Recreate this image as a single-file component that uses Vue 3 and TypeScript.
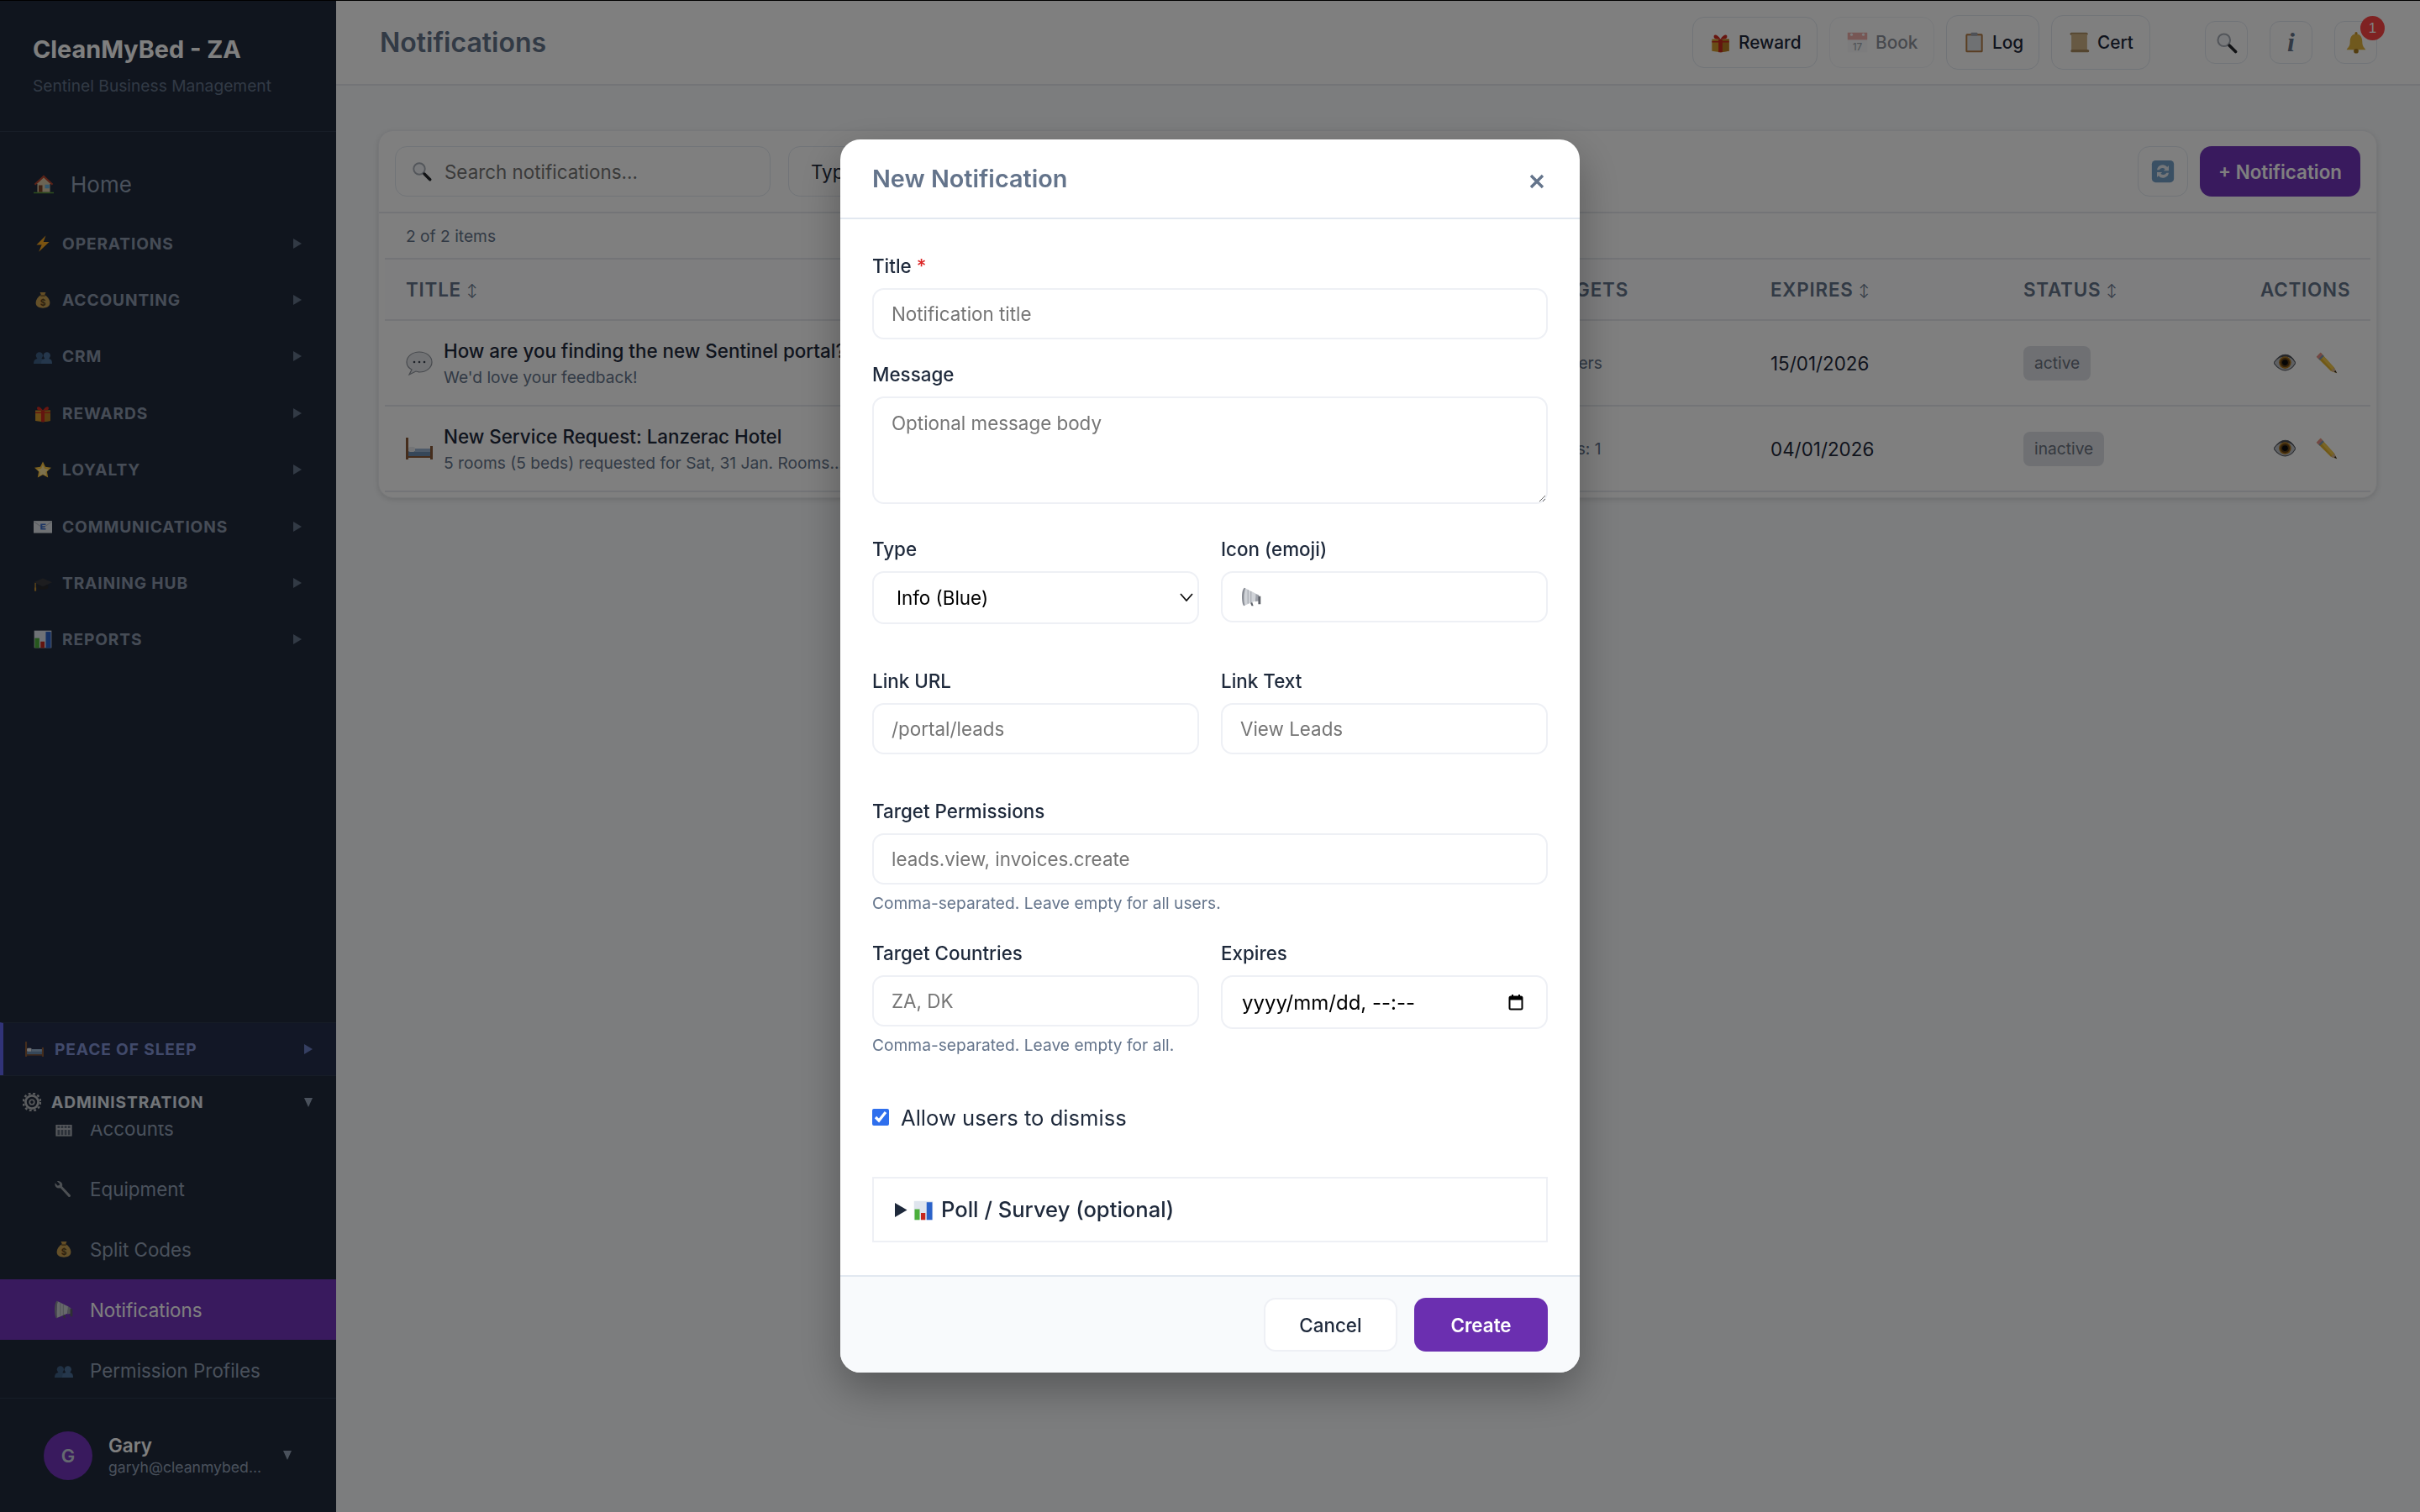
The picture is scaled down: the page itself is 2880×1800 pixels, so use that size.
<script setup lang="ts">
interface NavItem { label: string; icon: string; active?: boolean }
const sections: NavItem[] = [
  { label: 'OPERATIONS', icon: 'bolt' },
  { label: 'ACCOUNTING', icon: 'bag' },
  { label: 'CRM', icon: 'people' },
  { label: 'REWARDS', icon: 'gift' },
  { label: 'LOYALTY', icon: 'star' },
  { label: 'COMMUNICATIONS', icon: 'mail' },
  { label: 'TRAINING HUB', icon: 'cap' },
  { label: 'REPORTS', icon: 'chart' },
]
const adminItems: NavItem[] = [
  { label: 'Accounts', icon: 'office' },
  { label: 'Equipment', icon: 'wrench' },
  { label: 'Split Codes', icon: 'bag' },
  { label: 'Notifications', icon: 'horn', active: true },
  { label: 'Permission Profiles', icon: 'people' },
]
const rows = [
  { icon: 'balloon', title: 'How are you finding the new Sentinel portal?', sub: "We'd love your feedback!", type: 'Poll', targets: 'All users', expires: '15/01/2026', status: 'active' },
  { icon: 'bed', title: 'New Service Request: Lanzerac Hotel', sub: '5 rooms (5 beds) requested for Sat, 31 Jan. Rooms...', type: 'Info', targets: 'Perms: 1', expires: '04/01/2026', status: 'inactive' },
]
const href = (n: string): string => '#i-' + n
</script>

<template>
  <div class="app">
    <svg class="defs" aria-hidden="true">
      <defs>
        <g id="i-home"><path d="M16 3 2 16h4v13h20V16h4z" fill="#d9c9a8"/><path d="M16 2 1 16l2 2L16 6l13 12 2-2z" fill="#b5452f"/><rect x="8" y="18" width="6" height="11" fill="#7a4326"/><rect x="18" y="17" width="7" height="6" fill="#6ab0dc"/><path d="M0 29h32v2H0z" fill="#5c9a3c"/></g>
        <g id="i-bolt"><path d="M21 2 5 18h9L9 30l18-17h-10z" fill="#f5a623"/></g>
        <g id="i-bag"><path d="M11 3h10l-2 5h-6z" fill="#c79a4a"/><path d="M12 8h8c6 4 9 10 8 15-1 5-6 7-12 7S5 28 4 23C3 18 6 12 12 8z" fill="#c9a052"/><path d="M12 8h8v2h-8z" fill="#7a5a26"/><text x="16" y="26" font-size="15" font-weight="700" text-anchor="middle" fill="#5c431c" font-family="Inter">$</text></g>
        <g id="i-people"><circle cx="10" cy="15" r="6" fill="#3f6087"/><path d="M0 29c0-7 4-9 10-9s10 2 10 9z" fill="#3f6087"/><circle cx="23" cy="15" r="6" fill="#4a6f99"/><path d="M13 29c0-7 4-9 10-9s9 2 9 9z" fill="#4a6f99"/></g>
        <g id="i-gift"><path d="M3 11h26v18l-13 2-13-2z" fill="#d39a2c"/><path d="M16 12v19l13-2V11z" fill="#b97f22"/><rect x="13" y="11" width="6" height="20" fill="#c8281e"/><path d="M3 14h26v2H3z" fill="#c8281e"/><path d="M16 11C11 3 5 3 6 8c0 3 5 3 10 3zm0 0c5-8 11-8 10-3 0 3-5 3-10 3z" fill="#d12c20"/></g>
        <g id="i-star"><path d="M16 2l4.4 9.3 10.1 1.4-7.3 7 1.8 10L16 25l-9 4.7 1.8-10-7.3-7 10.1-1.4z" fill="#f7c23e"/><path d="M16 8l3 6.4 7 1-5 4.8 1.2 6.8L16 24l-6 3 1.2-6.8-5-4.8 7-1z" fill="#fbe39a"/></g>
        <g id="i-mail"><rect x="0" y="6" width="32" height="21" fill="#dfe3e8"/><path d="M0 6l16 11L32 6v2L16 19 0 8z" fill="#b4bac4"/><path d="M12 11h9v2h-6v2h5v2h-5v2h6v2h-9z" fill="#3b6cc9"/></g>
        <g id="i-cap"><path d="M16 8 0 15l16 7 16-7z" fill="#3a3a3e"/><path d="M7 19v6c4 3 14 3 18 0v-6l-9 4z" fill="#28282b"/><path d="M3 16v9" stroke="#c59030" stroke-width="2"/><rect x="1.5" y="24" width="3" height="6" fill="#c59030"/></g>
        <g id="i-chart"><rect x="1" y="1" width="30" height="30" fill="#dfe5ee"/><rect x="2" y="14" width="8" height="17" fill="#4caf3c"/><rect x="12" y="20" width="7" height="11" fill="#c7281e"/><rect x="21" y="3" width="9" height="28" fill="#2a62c9"/></g>
        <g id="i-bed"><rect x="0" y="3" width="3" height="26" fill="#8a5a38"/><rect x="29" y="13" width="3" height="16" fill="#8a5a38"/><rect x="3" y="19" width="26" height="6" fill="#6d8fb3"/><rect x="3" y="14" width="8" height="6" rx="2" fill="#e6e9ed"/><rect x="11" y="16" width="18" height="4" fill="#9ab5d2"/><rect x="3" y="25" width="26" height="2" fill="#8a5a38"/></g>
        <g id="i-gear"><circle cx="16" cy="16" r="11" fill="none" stroke="#b5b8bd" stroke-width="4"/><circle cx="16" cy="16" r="15" fill="none" stroke="#b5b8bd" stroke-width="3.5" stroke-dasharray="4 4"/><circle cx="16" cy="16" r="4" fill="none" stroke="#b5b8bd" stroke-width="2.5"/></g>
        <g id="i-office"><rect x="2" y="2" width="28" height="28" fill="#aeb3ba"/><g fill="#566071"><rect x="5" y="5" width="4" height="4"/><rect x="11" y="5" width="4" height="4"/><rect x="17" y="5" width="4" height="4"/><rect x="23" y="5" width="4" height="4"/><rect x="5" y="12" width="4" height="4"/><rect x="11" y="12" width="4" height="4"/><rect x="17" y="12" width="4" height="4"/><rect x="23" y="12" width="4" height="4"/><rect x="5" y="19" width="4" height="9"/><rect x="11" y="19" width="4" height="9"/><rect x="17" y="19" width="4" height="9"/><rect x="23" y="19" width="4" height="9"/></g></g>
        <g id="i-wrench"><path d="M4 3 9 8l-1 2-3 1-4-5c-2 6 3 11 9 9l14 15c2 2 5-1 3-3L13 12C15 7 10 2 4 3z" fill="#9aa0a8"/></g>
        <g id="i-horn"><path d="M4 1 3 31l19-8 2-12z" fill="#cfd2d7"/><path d="M4 1C1 3 0 10 0 16s1 13 3 15l2-1C3 26 3 6 6 2z" fill="#8a8e96"/><path d="M10 4v23M15 7v18" stroke="#a3a7ae" stroke-width="1.5"/><path d="M23 11l5 2v10l-6 1z" fill="#9ea2aa"/><path d="M14 26l3-1 2 6h-3zM27 15h4v13h-4z" fill="#5d6168"/></g>
        <g id="i-glass"><circle cx="12" cy="12" r="9" fill="#f3f5f8" stroke="#a7adb6" stroke-width="2.5"/><path d="M20 20l9 9" stroke="#24262b" stroke-width="4.5" stroke-linecap="round"/></g>
        <g id="i-bell"><path d="M16 3c7 0 9 6 9 12s3 8 5 11H2c2-3 5-5 5-11S9 3 16 3z" fill="#e0b23c"/><rect x="14" y="0" width="4" height="4" rx="2" fill="#c7952a"/><circle cx="16" cy="28" r="3.5" fill="#a77a1e"/></g>
        <g id="i-cal"><rect x="1" y="1" width="30" height="30" fill="#f4f5f7"/><rect x="1" y="1" width="30" height="11" fill="#e0605a"/><circle cx="7" cy="4" r="2" fill="#f4f5f7"/><circle cx="25" cy="4" r="2" fill="#f4f5f7"/><text x="16" y="28" font-size="15" text-anchor="middle" fill="#4b5563" font-family="Inter">17</text></g>
        <g id="i-clip"><rect x="3" y="3" width="26" height="28" rx="2" fill="#b37a42"/><rect x="5.5" y="5.5" width="21" height="23" fill="#dfe2e7"/><rect x="11" y="1" width="10" height="5" rx="1" fill="#9ca3af"/></g>
        <g id="i-scroll"><rect x="2" y="1" width="27" height="4" rx="2" fill="#a98a5e"/><rect x="4" y="3" width="24" height="26" fill="#cfb387"/><rect x="3" y="27" width="28" height="4" rx="2" fill="#a98a5e"/></g>
        <g id="i-sync"><rect x="1" y="1" width="30" height="30" rx="5" fill="#74a0c8"/><path d="M8 14a8 8 0 0 1 14-4l2-2v7h-7l2-2a5 5 0 0 0-8 1zm16 4a8 8 0 0 1-14 4l-2 2v-7h7l-2 2a5 5 0 0 0 8-1z" fill="#e8edf2"/></g>
        <g id="i-balloon"><path d="M16 3C8 3 1 8 1 15c0 4 2 7 6 9l-3 6 8-4c1 0 3 1 4 1 8 0 15-5 15-12S24 3 16 3z" fill="#e4e7eb" stroke="#8f949c" stroke-width="1.2"/><circle cx="10" cy="15" r="1.3" fill="#3c4450"/><circle cx="16" cy="15" r="1.3" fill="#3c4450"/><circle cx="22" cy="15" r="1.3" fill="#3c4450"/></g>
        <g id="i-eye"><path d="M0 16C6 7 12 4 17 4c6 0 11 5 15 12-4 7-9 11-15 11-6 0-12-4-17-11z" fill="#bfc2c8" stroke="#5b5f66" stroke-width="1.4"/><path d="M4 12C9 5 14 4 17 4c6 0 11 4 14 10-5-5-8-7-14-7S8 8 4 12z" fill="#4a4d54"/><circle cx="16.5" cy="15.5" r="9" fill="#a87420"/><circle cx="16.5" cy="15.5" r="6.8" fill="#5c3c14"/><circle cx="16.5" cy="15.5" r="4.2" fill="#0c0c0c"/></g>
        <g id="i-pencil"><path d="M1 7l6-6 20 22 4 8-9-3z" fill="#e2b32f"/><path d="M4 4l20 22 3-3L7 1z" fill="#f2c94c"/><path d="M1 7l6-6 3 3-6 6z" fill="#e68f8f"/><path d="M4 10l6-6 2 2-6 6z" fill="#7f95b3"/><path d="M22 28l5-5 4 8z" fill="#d8b58a"/><path d="M28.5 27l2.5 4-4-2z" fill="#16181c"/></g>
      </defs>
    </svg>

    <aside class="sidebar">
      <div class="brand">
        <div class="brand-name">CleanMyBed - ZA</div>
        <div class="brand-sub">Sentinel Business Management</div>
      </div>
      <nav class="nav">
        <a class="home"><svg class="ic home-ic" viewBox="0 0 32 32"><use :href="href('home')" /></svg>Home</a>
        <div v-for="s in sections" :key="s.label" class="section">
          <svg class="ic sec-ic" viewBox="0 0 32 32"><use :href="href(s.icon)" /></svg>
          <span class="sec-label">{{ s.label }}</span>
          <span class="tri right"></span>
        </div>
      </nav>
      <div class="pinned peace">
        <svg class="ic sec-ic" viewBox="0 0 32 32"><use :href="href('bed')" /></svg>
        <span class="sec-label">PEACE OF SLEEP</span>
        <span class="tri right"></span>
      </div>
      <div class="pinned admin">
        <svg class="ic gear-ic" viewBox="0 0 32 32"><use :href="href('gear')" /></svg>
        <span class="sec-label">ADMINISTRATION</span>
        <span class="tri down"></span>
      </div>
      <div class="admin-scroll">
        <div class="admin-list">
          <a v-for="i in adminItems" :key="i.label" class="admin-item" :class="{ active: i.active }">
            <svg class="ic sec-ic" viewBox="0 0 32 32"><use :href="href(i.icon)" /></svg>
            {{ i.label }}
          </a>
        </div>
      </div>
      <div class="user">
        <div class="avatar">G</div>
        <div class="user-text">
          <div class="user-name">Gary</div>
          <div class="user-mail">garyh@cleanmybed...</div>
        </div>
        <span class="tri down small"></span>
      </div>
    </aside>

    <main class="main">
      <header class="topbar">
        <h1 class="page-title">Notifications</h1>
        <div class="top-actions">
          <button class="tbtn b-reward"><svg class="ic t-ic" viewBox="0 0 32 32"><use :href="href('gift')" /></svg>Reward</button>
          <button class="tbtn dim b-book"><svg class="ic t-ic" viewBox="0 0 32 32"><use :href="href('cal')" /></svg>Book</button>
          <button class="tbtn tall b-log"><svg class="ic t-ic" viewBox="0 0 32 32"><use :href="href('clip')" /></svg>Log</button>
          <button class="tbtn tall b-cert"><svg class="ic t-ic" viewBox="0 0 32 32"><use :href="href('scroll')" /></svg>Cert</button>
          <div class="icon-btns">
            <button class="ibtn"><svg class="ic i-ic" viewBox="0 0 32 32"><use :href="href('glass')" /></svg></button>
            <button class="ibtn info">i</button>
            <button class="ibtn bell"><svg class="ic i-ic" viewBox="0 0 32 32"><use :href="href('bell')" /></svg><span class="badge">1</span></button>
          </div>
        </div>
      </header>

      <section class="card">
        <div class="toolbar">
          <div class="search">
            <svg class="ic search-ic" viewBox="0 0 32 32"><use :href="href('glass')" /></svg>
            <input class="search-input" placeholder="Search notifications..." />
          </div>
          <div class="filter">Type: All</div>
          <div class="spacer"></div>
          <button class="refresh"><svg class="ic ref-ic" viewBox="0 0 32 32"><use :href="href('sync')" /></svg></button>
          <button class="add">+ Notification</button>
        </div>
        <div class="inner">
          <div class="count">2 of 2 items</div>
          <div class="trow thead">
            <div>TITLE <span class="sort">↕</span></div>
            <div>TYPE <span class="sort">↕</span></div>
            <div>TARGETS</div>
            <div>EXPIRES <span class="sort">↕</span></div>
            <div>STATUS <span class="sort">↕</span></div>
            <div class="act-h">ACTIONS</div>
          </div>
          <div v-for="r in rows" :key="r.title" class="trow tbody">
            <div class="title-cell">
              <svg class="ic row-ic" viewBox="0 0 32 32"><use :href="href(r.icon)" /></svg>
              <div class="title-text">
                <div class="r-title">{{ r.title }}</div>
                <div class="r-sub">{{ r.sub }}</div>
              </div>
            </div>
            <div class="muted">{{ r.type }}</div>
            <div class="muted">{{ r.targets }}</div>
            <div class="date">{{ r.expires }}</div>
            <div><span class="pill">{{ r.status }}</span></div>
            <div class="acts">
              <svg class="ic act-ic" viewBox="0 0 32 32"><use :href="href('eye')" /></svg>
              <svg class="ic act-ic" viewBox="0 0 32 32"><use :href="href('pencil')" /></svg>
            </div>
          </div>
        </div>
      </section>
    </main>

    <div class="overlay">
      <div class="modal">
        <div class="m-head">
          <h2 class="m-title">New Notification</h2>
          <svg class="m-close" viewBox="0 0 18 18"><path d="M2 2l14 14M16 2 2 16" stroke="#64748b" stroke-width="3.4" fill="none" /></svg>
        </div>
        <div class="m-body">
          <div class="field title-field">
            <label>Title <span class="req">*</span></label>
            <input placeholder="Notification title" />
          </div>
          <div class="field msg-field">
            <label>Message</label>
            <textarea placeholder="Optional message body"></textarea>
          </div>
          <div class="pair type-pair">
            <div class="field">
              <label>Type</label>
              <div class="sel-wrap">
                <select class="sel"><option>Info (Blue)</option></select>
                <svg class="chev" viewBox="0 0 16 10"><path d="M1 1l7 8 7-8" stroke="#111" stroke-width="1.8" fill="none" /></svg>
              </div>
            </div>
            <div class="field">
              <label>Icon (emoji)</label>
              <div class="icon-input">
                <input />
                <svg class="ic field-ic" viewBox="0 0 32 32"><use :href="href('horn')" /></svg>
              </div>
            </div>
          </div>
          <div class="pair link-pair">
            <div class="field">
              <label>Link URL</label>
              <input placeholder="/portal/leads" />
            </div>
            <div class="field">
              <label>Link Text</label>
              <input placeholder="View Leads" />
            </div>
          </div>
          <div class="field perm">
            <label>Target Permissions</label>
            <input placeholder="leads.view, invoices.create" />
            <div class="hint">Comma-separated. Leave empty for all users.</div>
          </div>
          <div class="pair country-pair">
            <div class="field">
              <label>Target Countries</label>
              <input placeholder="ZA, DK" />
              <div class="hint">Comma-separated. Leave empty for all.</div>
            </div>
            <div class="field">
              <label>Expires</label>
              <div class="date-input">
                <span>yyyy/mm/dd, --:--</span>
                <svg class="cal" viewBox="0 0 20 20"><path d="M6 1v3M14 1v3" stroke="#000" stroke-width="2"/><rect x="2.5" y="3.5" width="15" height="15" rx="1.5" fill="none" stroke="#000" stroke-width="2"/><rect x="2.5" y="3.5" width="15" height="4" fill="#000"/></svg>
              </div>
            </div>
          </div>
          <label class="check"><input type="checkbox" checked />Allow users to dismiss</label>
          <details class="poll">
            <summary><svg class="ic poll-ic" viewBox="0 0 32 32"><use :href="href('chart')" /></svg> Poll / Survey (optional)</summary>
          </details>
        </div>
        <div class="m-foot">
          <button class="cancel">Cancel</button>
          <button class="create">Create</button>
        </div>
      </div>
    </div>
  </div>
</template>

<style>
html, body { margin: 0; height: 100%; overflow: hidden; background: #f8fafc; }
</style>

<style scoped>
.app { display: flex; width: 2880px; height: 1800px; font-family: Inter, "Noto Sans", sans-serif; color: #1e293b; overflow: hidden; position: relative; border-top: 1px solid #000; box-sizing: border-box; }
.defs { position: absolute; width: 0; height: 0; }
.ic { display: block; flex: none; }

.sidebar { width: 400px; flex: none; background: #212b3d; display: flex; flex-direction: column; height: 1799px; }
.brand { padding: 40px 39px 0; height: 115px; border-bottom: 1px solid #2e3a4f; }
.brand-name { font-size: 28.8px; line-height: 36px; font-weight: 700; color: #fff; }
.brand-sub { font-size: 19.2px; line-height: 28px; margin-top: 11px; color: #64748b; }
.nav { flex: 1; padding-top: 33px; }
.home { display: flex; align-items: center; height: 58px; margin-bottom: 8px; padding-left: 40px; font-size: 26px; color: #94a3b8; }
.home-ic { width: 24px; height: 24px; margin-right: 20px; }
.section { display: flex; align-items: center; height: 67.4px; padding-left: 40px; }
.sec-ic { width: 22px; height: 22px; }
.sec-label { font-size: 19.2px; font-weight: 700; letter-spacing: .85px; color: #8c99ad; flex: 1; margin-left: 12px; }
.tri { display: block; flex: none; width: 0; height: 0; }
.tri.right { border-left: 10px solid #64748b; border-top: 6px solid transparent; border-bottom: 6px solid transparent; margin-right: 41px; }
.tri.down { border-top: 11px solid #94a3b8; border-left: 5.5px solid transparent; border-right: 5.5px solid transparent; margin-right: 28px; }
.tri.small { margin-right: 53px; }
.pinned { display: flex; align-items: center; border-top: 1px solid #2e3a4f; }
.peace { height: 62px; background: #242e4c; border-left: 4px solid #6366f1; padding-left: 26px; }
.peace .sec-label { color: #8394d6; margin-left: 13px; }
.peace .tri.right { border-left-color: #6b7fc4; margin-right: 28px; }
.admin { height: 54px; padding-top: 4px; padding-left: 27px; }
.gear-ic { width: 22px; height: 22px; }
.admin .sec-label { color: #e2e8f0; }
.admin-scroll { height: 325px; overflow: hidden; display: flex; flex-direction: column; justify-content: flex-end; flex: none; }
.admin-list { margin-bottom: -3px; }
.admin-item { display: flex; align-items: center; height: 72px; padding-left: 65px; font-size: 22.4px; color: #94a3b8; gap: 20px; }
.admin-item.active { background: #7234bc; color: #fff; }
.user { height: 136px; border-top: 1px solid #2e3a4f; display: flex; align-items: center; padding-left: 52px; flex: none; box-sizing: border-box; }
.avatar { width: 58px; height: 58px; border-radius: 50%; background: #7234bc; color: #cbd5e1; display: flex; align-items: center; justify-content: center; font-size: 22px; font-weight: 600; flex: none; }
.user-text { flex: 1; margin-left: 19px; }
.user-name { font-size: 22.4px; line-height: 28px; font-weight: 600; color: #fff; }
.user-mail { font-size: 17.6px; line-height: 22px; margin-top: 1px; color: #94a3b8; }

.main { flex: 1; min-width: 0; display: flex; flex-direction: column; }
.topbar { height: 101px; box-sizing: border-box; background: #fff; border-bottom: 2px solid #e6e9ee; display: flex; align-items: center; justify-content: space-between; padding: 0 51px 0 52px; flex: none; }
.page-title { margin: 0; font-size: 32px; font-weight: 600; color: #64748b; }
.top-actions { display: flex; align-items: center; gap: 14px; }
.tbtn { display: flex; align-items: center; gap: 9px; height: 61px; padding: 0 0 0 20px; box-sizing: border-box; background: #fff; border: 1px solid #e2e8f0; border-radius: 14px; font: 500 20.8px Inter, sans-serif; color: #1e293b; }
.tbtn.tall { height: 65px; }
.tbtn.dim { opacity: .5; }
.b-reward { width: 149px; }
.b-book { width: 125px; }
.b-log { width: 111px; }
.b-cert { width: 118px; }
.t-ic { width: 25px; height: 25px; }
.icon-btns { display: flex; gap: 26px; margin-left: 51px; }
.ibtn { position: relative; width: 51px; height: 51px; padding: 0; display: flex; align-items: center; justify-content: center; background: #fff; border: 1px solid #e2e8f0; border-radius: 12px; box-sizing: border-box; }
.i-ic { width: 26px; height: 26px; }
.info { font: italic 700 32px "Liberation Serif", serif; color: #64748b; }
.badge { position: absolute; top: -7px; right: -10px; width: 29px; height: 29px; border-radius: 50%; background: #ff4545; color: #fff; font-size: 17px; font-weight: 500; display: flex; align-items: center; justify-content: center; }

.card { margin: 53px 51px 0 50px; height: 438px; box-sizing: border-box; background: #fff; border-radius: 18px; box-shadow: 0 2px 6px rgba(0,0,0,.12); border: 1px solid #eef0f4; padding: 0 7px; }
.toolbar { display: flex; align-items: center; height: 98px; border-bottom: 2px solid #e6e9ee; margin: 0 -7px; padding: 0 19px; box-sizing: border-box; }
.search { display: flex; align-items: center; width: 447px; height: 60px; box-sizing: border-box; border: 1px solid #e2e8f0; border-radius: 14px; padding-left: 19px; gap: 13px; }
.search-ic { width: 24px; height: 24px; }
.search-input { border: 0; outline: 0; flex: 1; min-width: 0; font: 400 22.4px Inter, sans-serif; background: transparent; }
.filter { margin-left: 21px; height: 60px; box-sizing: border-box; width: 220px; border: 1px solid #e2e8f0; border-radius: 14px; padding-left: 26px; display: flex; align-items: center; font-size: 22.4px; }
.spacer { flex: 1; }
.refresh { width: 60px; height: 60px; padding: 0; background: #fff; border: 1px solid #e2e8f0; border-radius: 14px; display: flex; align-items: center; justify-content: center; }
.ref-ic { width: 28px; height: 28px; }
.add { margin-left: 14px; width: 191px; height: 60px; padding: 0; background: #7234bc; color: #fff; border: 0; border-radius: 14px; font: 600 22.4px Inter, sans-serif; }
.count { height: 55px; display: flex; align-items: center; padding-left: 25px; font-size: 19.2px; color: #64748b; border-bottom: 2px solid #e6e9ee; box-sizing: border-box; }
.trow { display: grid; grid-template-columns: 1017px 329px 278px 301px 282px 1fr; align-items: center; padding: 0 25px; border-bottom: 2px solid #e6e9ee; box-sizing: border-box; }
.thead { height: 73px; font-size: 22.4px; font-weight: 600; letter-spacing: .8px; color: #64748b; background: #fcfdfe; }
.sort { font-size: 15px; font-weight: 400; vertical-align: 2px; }
.act-h { text-align: right; }
.tbody { height: 102px; }
.title-cell { display: flex; align-items: center; gap: 13px; min-width: 0; }
.row-ic { width: 32px; height: 32px; }
.title-text { min-width: 0; margin-top: 1px; }
.r-title { font-size: 22.4px; line-height: 30px; font-weight: 500; color: #1e293b; white-space: nowrap; }
.r-sub { font-size: 19.2px; line-height: 28px; color: #64748b; margin-top: 2px; white-space: nowrap; }
.muted { font-size: 19.2px; color: #64748b; }
.date { font-size: 22.4px; color: #1e293b; }
.pill { display: inline-flex; align-items: center; height: 41px; padding: 0 13px; border-radius: 8px; background: #dee1e6; font-size: 19.2px; color: #6b7280; box-sizing: border-box; }
.acts { display: flex; justify-content: flex-end; gap: 24px; padding-right: 14px; }
.act-ic { width: 26px; height: 26px; }

.overlay { position: fixed; inset: 0; background: rgba(0,0,0,.5); display: flex; align-items: center; justify-content: center; }
.modal { width: 880px; height: 1468px; background: #fff; border-radius: 24px; box-shadow: 0 20px 50px rgba(0,0,0,.3); display: flex; flex-direction: column; overflow: hidden; }
.m-head { height: 95px; box-sizing: border-box; border-bottom: 2px solid #e2e8f0; display: flex; align-items: center; justify-content: space-between; padding: 0 42px 0 38px; flex: none; }
.m-title { margin: 0; font-size: 28.8px; font-weight: 600; color: #64748b; }
.m-close { width: 18px; height: 18px; margin-top: 6px; }
.m-body { flex: 1; padding: 42px 38px 0; display: flex; flex-direction: column; min-height: 0; }
.field { display: flex; flex-direction: column; flex: 1; min-width: 0; }
.field > label { font-size: 22.4px; line-height: 28px; font-weight: 500; color: #1e293b; margin-bottom: 12px; }
.req { color: #dc2626; }
input, textarea { box-sizing: border-box; font-family: Inter, sans-serif; }
.field input, .field textarea { width: 100%; height: 61px; border: 2px solid #eef0f5; border-radius: 14px; padding: 0 21px; font-size: 22.4px; outline: 0; background: #fff; color: #1e293b; display: block; flex: none; }
.field textarea { height: 128px; padding: 16px 21px; resize: vertical; }
.title-field { flex: none; height: 129px; }
.msg-field { flex: none; height: 208px; }
.pair { display: flex; gap: 26px; flex: none; }
.sel-wrap { position: relative; }
.sel { display: block; appearance: none; height: 63px; width: 100%; border: 2px solid #eef0f5; border-radius: 14px; padding: 0 0 0 27px; font: 400 22.4px Inter, sans-serif; background: #fff; color: #000; box-sizing: border-box; }
.chev { position: absolute; right: 7px; top: 26px; width: 16px; height: 10px; }
.type-pair { height: 157px; }
.icon-input { position: relative; }
.field-ic { position: absolute; left: 25px; top: 19px; width: 23px; height: 23px; }
.link-pair { height: 155px; }
.perm { flex: none; height: 169px; }
.hint { font-size: 19.2px; line-height: 28px; margin-top: 8px; color: #64748b; white-space: nowrap; }
.date-input { height: 64px; box-sizing: border-box; border: 2px solid #eef0f5; border-radius: 14px; padding: 0 26px 0 23px; font-size: 24px; color: #000; display: flex; align-items: center; justify-content: space-between; }
.cal { width: 20px; height: 20px; }
.country-pair { height: 191px; }
.check { display: flex; align-items: center; height: 36px; flex: none; font-size: 25.6px; color: #1e293b; gap: 14px; font-weight: 400; }
.check input { width: 20px; height: 20px; margin: 0; accent-color: #2f6fed; }
.poll { margin-top: 53px; border: 2px solid #eef0f5; height: 78px; box-sizing: border-box; padding: 0 25px; flex: none; }
.poll summary { display: list-item; font-size: 25.6px; line-height: 74px; color: #1e293b; font-weight: 500; }
.poll-ic { display: inline-block; width: 24px; height: 26px; vertical-align: -5px; margin: 0 2px 0 -5px; }
.m-foot { height: 116px; border-top: 2px solid #e2e8f0; background: #f8fafc; display: flex; align-items: center; justify-content: flex-end; gap: 20px; padding: 0 38px 0 39px; flex: none; box-sizing: border-box; }
.cancel, .create { width: 159px; height: 64px; border-radius: 14px; font: 500 22.4px Inter, sans-serif; }
.cancel { background: #fff; border: 2px solid #eef0f5; color: #1e293b; }
.create { background: #6b2fb0; border: 0; color: #fff; font-weight: 600; }
</style>
